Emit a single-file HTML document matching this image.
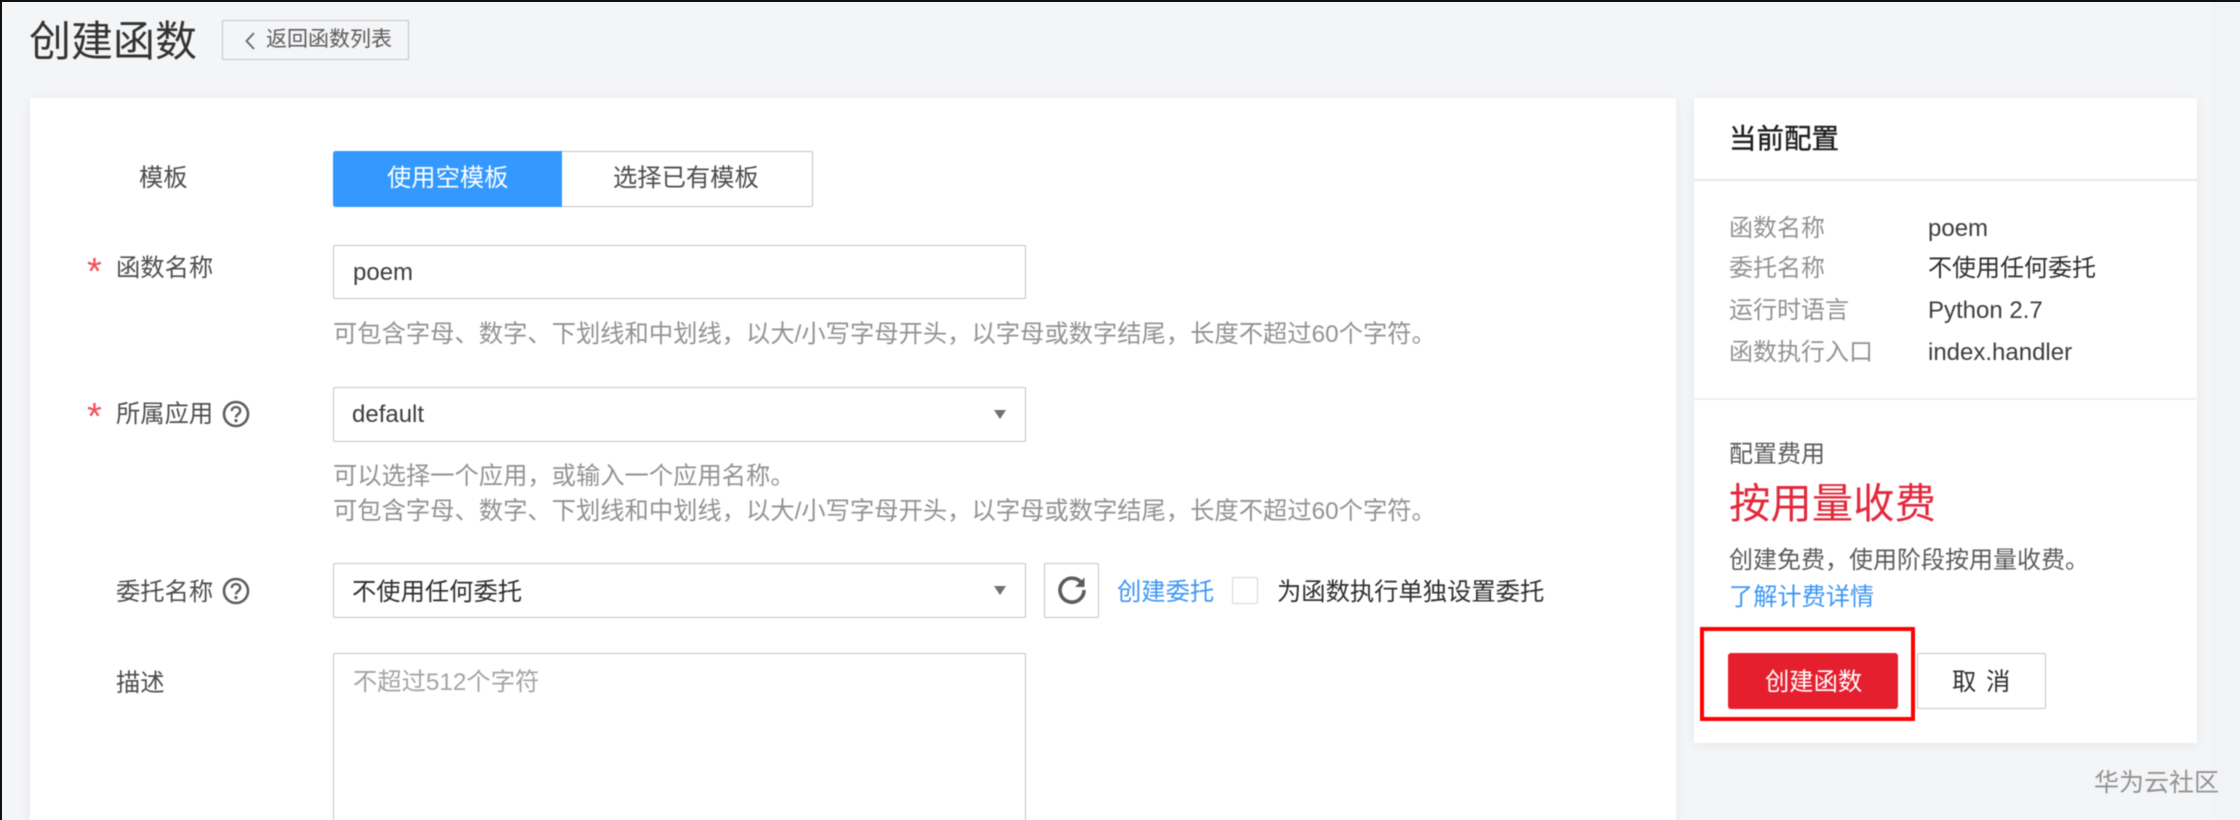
<!DOCTYPE html>
<html lang="zh-CN">
<head>
<meta charset="utf-8">
<title>创建函数</title>
<style>
html,body{margin:0;padding:0;width:2240px;height:820px;overflow:hidden;}
body{position:relative;background:#f4f5f7;font-family:"Liberation Sans","Noto Sans CJK SC",sans-serif;color:#333;}
#page{position:absolute;left:0;top:0;width:2240px;height:820px;overflow:hidden;background:#f4f5f7;filter:blur(.4px)}
#edge-t{position:absolute;left:0;top:0;width:2240px;height:1.5px;background:#111;z-index:9}
#edge-l{position:absolute;left:0;top:0;width:1.5px;height:820px;background:#111;z-index:9}
#rs{position:absolute;left:2212px;top:1px;width:28px;height:819px;background:#f2f3f5}
.t{position:absolute;white-space:nowrap;font-size:24.3px;line-height:36px;height:36px;}
.g{color:#929292}
.l{color:#4d4d4d}
.s{color:#f0505a;font-size:38px;line-height:40px;height:40px}
.card{position:absolute;background:#fff;box-shadow:0 2px 12px rgba(0,0,0,.06)}
.box{position:absolute;box-sizing:border-box;background:#fff;border:1.5px solid #c4c4c4;border-radius:2px}
.arr{position:absolute;width:0;height:0;border-left:6px solid transparent;border-right:6px solid transparent;border-top:9px solid #707070}
svg{position:absolute;overflow:visible}
</style>
</head>
<body>
<div id="page">
<div id="rs"></div>

<div class="t" style="left:29px;top:15px;font-size:42px;line-height:54px;height:54px;color:#333">创建函数</div>
<div class="box" style="left:222px;top:20px;width:187px;height:40px;background:#f4f5f7;border-color:#c4c4c4"></div>
<svg style="left:244px;top:31px" width="12" height="20"><path d="M10 2 L2.5 10 L10 18" fill="none" stroke="#666" stroke-width="1.8"/></svg>
<div class="t" style="left:266px;top:22px;font-size:21px;color:#5c5c5c">返回函数列表</div>

<div class="card" style="left:30px;top:98px;width:1646px;height:740px"></div>
<div class="card" style="left:1694px;top:98px;width:503px;height:645px"></div>

<!-- 模板 -->
<div class="t l" style="left:139px;top:161px">模板</div>
<div class="box" style="left:333px;top:151px;width:480px;height:56px"></div>
<div style="position:absolute;left:333px;top:151px;width:229px;height:56px;background:#3399ff;border-radius:3px 0 0 3px"></div>
<div class="t" style="left:387px;top:161px;color:#fff">使用空模板</div>
<div class="t l" style="left:613px;top:161px">选择已有模板</div>

<!-- 函数名称 -->
<div class="t s" style="left:87px;top:252px">*</div>
<div class="t l" style="left:116px;top:251px">函数名称</div>
<div class="box" style="left:333px;top:245px;width:693px;height:54px"></div>
<div class="t" style="left:353px;top:255px;font-size:24px;color:#3d3d3d">poem</div>
<div class="t g" style="left:333px;top:317px">可包含字母、数字、下划线和中划线&#65292;以大/小写字母开头&#65292;以字母或数字结尾&#65292;长度不超过60个字符。</div>

<!-- 所属应用 -->
<div class="t s" style="left:87px;top:397px">*</div>
<div class="t l" style="left:116px;top:397px">所属应用</div>
<svg style="left:222px;top:400px" width="28" height="28"><circle cx="14" cy="14" r="12" fill="none" stroke="#5c5c5c" stroke-width="2.6"/><path d="M9.8 11 C9.8 5.8 18.2 5.8 18.2 11 C18.2 14 14 14.2 14 17.4" fill="none" stroke="#5c5c5c" stroke-width="2.4"/><circle cx="14" cy="20.6" r="1.6" fill="#5c5c5c"/></svg>
<div class="box" style="left:333px;top:387px;width:693px;height:55px"></div>
<div class="t" style="left:352px;top:397px;font-size:24px;color:#3d3d3d">default</div>
<div class="arr" style="left:994px;top:410px"></div>
<div class="t g" style="left:333px;top:459px">可以选择一个应用&#65292;或输入一个应用名称。</div>
<div class="t g" style="left:333px;top:494px">可包含字母、数字、下划线和中划线&#65292;以大/小写字母开头&#65292;以字母或数字结尾&#65292;长度不超过60个字符。</div>

<!-- 委托名称 -->
<div class="t l" style="left:116px;top:575px">委托名称</div>
<svg style="left:222px;top:577px" width="28" height="28"><circle cx="14" cy="14" r="12" fill="none" stroke="#5c5c5c" stroke-width="2.6"/><path d="M9.8 11 C9.8 5.8 18.2 5.8 18.2 11 C18.2 14 14 14.2 14 17.4" fill="none" stroke="#5c5c5c" stroke-width="2.4"/><circle cx="14" cy="20.6" r="1.6" fill="#5c5c5c"/></svg>
<div class="box" style="left:333px;top:563px;width:693px;height:55px"></div>
<div class="t" style="left:352px;top:575px;color:#2e2e2e">不使用任何委托</div>
<div class="arr" style="left:994px;top:586px"></div>
<div class="box" style="left:1044px;top:563px;width:55px;height:55px"></div>
<svg style="left:1057px;top:575px" width="30" height="30"><path d="M25 8.5 A12 12 0 1 0 27 15" fill="none" stroke="#5c5c5c" stroke-width="3.6"/><path d="M27.5 2.5 L27.5 12 L18 12 Z" fill="#5c5c5c"/></svg>
<div class="t" style="left:1117px;top:575px;color:#3d96f5">创建委托</div>
<div class="box" style="left:1232px;top:577px;width:26px;height:27px;border-color:#d4d4d4"></div>
<div class="t" style="left:1277px;top:575px;color:#2e2e2e">为函数执行单独设置委托</div>

<!-- 描述 -->
<div class="t l" style="left:116px;top:666px">描述</div>
<div class="box" style="left:333px;top:653px;width:693px;height:190px"></div>
<div class="t" style="left:353px;top:665px;color:#a4a4a4">不超过512个字符</div>

<!-- 当前配置 -->
<div class="t" style="left:1729px;top:121px;font-size:27.5px;color:#1f1f1f;-webkit-text-stroke:.4px #1f1f1f">当前配置</div>
<div style="position:absolute;left:1694px;top:179px;width:503px;height:2px;background:#e9e9e9"></div>
<div class="t g" style="left:1729px;top:211px;font-size:24px">函数名称</div>
<div class="t" style="left:1928px;top:211px;font-size:24px;color:#3d3d3d">poem</div>
<div class="t g" style="left:1729px;top:251px;font-size:24px">委托名称</div>
<div class="t" style="left:1928px;top:251px;font-size:24px;color:#2e2e2e">不使用任何委托</div>
<div class="t g" style="left:1729px;top:293px;font-size:24px">运行时语言</div>
<div class="t" style="left:1928px;top:293px;font-size:24px;color:#3d3d3d">Python 2.7</div>
<div class="t g" style="left:1729px;top:335px;font-size:24px">函数执行入口</div>
<div class="t" style="left:1928px;top:335px;font-size:24px;color:#3d3d3d">index.handler</div>
<div style="position:absolute;left:1694px;top:398px;width:503px;height:2px;background:#efefef"></div>

<div class="t" style="left:1729px;top:437px;font-size:24px;color:#5c5c5c">配置费用</div>
<div class="t" style="left:1729px;top:477px;font-size:41.4px;line-height:54px;height:54px;color:#e3283c">按用量收费</div>
<div class="t" style="left:1729px;top:543px;font-size:24px;color:#5c5c5c">创建免费&#65292;使用阶段按用量收费。</div>
<div class="t" style="left:1729px;top:580px;font-size:24.2px;color:#3d96f5">了解计费详情</div>

<div style="position:absolute;left:1728px;top:653px;width:170px;height:56px;background:#e61f2e;border-radius:3px"></div>
<div class="t" style="left:1765px;top:665px;color:#fff">创建函数</div>
<div class="box" style="left:1917px;top:653px;width:129px;height:56px"></div>
<div class="t" style="left:1952px;top:665px;color:#2e2e2e;word-spacing:3px">取 消</div>
<div style="position:absolute;box-sizing:border-box;left:1700px;top:627px;width:215px;height:94px;border:4.5px solid #ff0000"></div>

<div class="t" style="left:2094px;top:765px;font-size:25px;color:#929292">华为云社区</div>
</div>
<div id="edge-t"></div>
<div id="edge-l"></div>
</body>
</html>
